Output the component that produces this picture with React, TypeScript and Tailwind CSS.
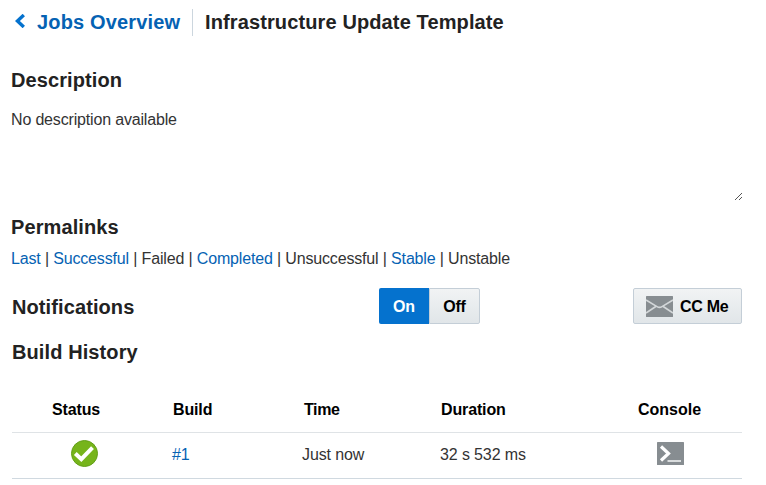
import React from "react";

const permalinks = [
  { label: "Last", link: true },
  { label: "Successful", link: true },
  { label: "Failed", link: false },
  { label: "Completed", link: true },
  { label: "Unsuccessful", link: false },
  { label: "Stable", link: true },
  { label: "Unstable", link: false },
];

function Heading({ children, className = "" }: { children: React.ReactNode; className?: string }) {
  return <h2 className={`text-[20px] leading-6 font-bold tracking-[0.1px] text-[#222] ${className}`}>{children}</h2>;
}

function BackIcon() {
  return (
    <svg width="10" height="14" viewBox="0 0 10 14" fill="none" stroke="#0572ce" strokeWidth="3.4">
      <path d="M8.8 1 2.4 7l6.4 6" />
    </svg>
  );
}

function ResizeGrip() {
  return (
    <svg width="8" height="8" viewBox="0 0 8 8" fill="#555" shapeRendering="crispEdges">
      {[0, 1, 2, 3, 4, 5, 6].map((i) => (
        <rect key={i} x={i} y={6 - i} width="1" height="1" />
      ))}
      {[4, 5, 6].map((i) => (
        <rect key={i} x={i} y={10 - i} width="1" height="1" />
      ))}
    </svg>
  );
}

function MailIcon() {
  return (
    <svg width="27" height="21" viewBox="0 0 27 21">
      <rect width="27" height="21" rx="0.5" fill="#878d91" />
      <path d="M0 4 11 10.6q2.5 1.5 5 0L27 4M0 17l9.8-6.5M27 17l-9.8-6.5" fill="none" stroke="#d3d7d9" strokeWidth="1.6" />
    </svg>
  );
}

function SuccessIcon() {
  return (
    <svg width="28" height="28" viewBox="0 0 28 28">
      <circle cx="14.5" cy="13.5" r="13" fill="#76b41b" stroke="#639f18" strokeWidth="1" />
      <path d="m5.3 13.5 6 5.6L22.5 7.6" fill="none" stroke="#fff" strokeWidth="4" />
    </svg>
  );
}

function ConsoleIcon() {
  return (
    <svg width="27" height="23" viewBox="0 0 27 23">
      <rect width="27" height="23" rx="0.5" fill="#878d91" />
      <path d="m4 4.5 7.5 7L4 18.5" fill="none" stroke="#fff" strokeWidth="3.2" />
      <path d="M10.5 19H24" stroke="#eef0f1" strokeWidth="1.6" />
    </svg>
  );
}

export default function App() {
  return (
    <main className="h-[485px] w-[766px] overflow-hidden bg-white pl-[11px] font-['Liberation_Sans',Arial,sans-serif] text-[16px] leading-5 text-[#333]">
      <header className="flex h-[44px] items-center">
        <span className="mt-[-3px] ml-[4px] w-[22px]"><BackIcon /></span>
        <a className="w-[144px] text-[20px] font-bold tracking-[0.15px] whitespace-nowrap text-[#0562b3]">Jobs Overview</a>
        <span className="ml-[11px] h-[27px] w-px bg-[#ccd6de]" />
        <h1 className="ml-[12px] text-[20px] font-bold tracking-[0.12px] text-[#222]">Infrastructure Update Template</h1>
      </header>

      <section className="h-[157px] w-[732px]">
        <Heading className="pt-[24px]">Description</Heading>
        <div className="mt-[17px] flex h-[92px] items-start justify-between">
          <p className="mt-px tracking-[-0.17px]">No description available</p>
          <span className="self-end"><ResizeGrip /></span>
        </div>
      </section>

      <section className="pt-[14px]">
        <Heading>Permalinks</Heading>
        <p className="mt-[10px] tracking-[-0.16px] whitespace-nowrap">
          {permalinks.map((item, i) => (
            <React.Fragment key={item.label}>
              {i > 0 && " | "}
              {item.link ? <a className="text-[#0562b3]">{item.label}</a> : <span>{item.label}</span>}
            </React.Fragment>
          ))}
        </p>
      </section>

      <section className="mt-[19px] flex h-[36px] w-[731px] items-center">
        <Heading className="w-[368px] pt-[2px] pl-px">Notifications</Heading>
        <div className="flex h-[36px] w-[101px] font-bold">
          <button className="w-[50px] rounded-l-[2px] bg-[#0572ce] pt-[2px] text-white">On</button>
          <button className="w-[51px] rounded-r-[2px] border border-[#c4ced7] bg-linear-to-b from-[#f1f3f4] to-[#e1e6e9] pt-[2px] tracking-[-0.2px] text-black">Off</button>
        </div>
        <button className="ml-auto flex h-[36px] w-[109px] items-center rounded-[2px] border border-[#c4ced7] bg-linear-to-b from-[#f1f3f4] to-[#e1e6e9] pl-[12px] font-bold text-black">
          <MailIcon />
          <span className="ml-[7px] pt-[2px] tracking-[-0.3px]">CC Me</span>
        </button>
      </section>

      <section className="ml-px w-[730px]">
        <Heading className="mt-[16px]">Build History</Heading>
        <div className="mt-[23px] grid h-[46px] grid-cols-[161px_131px_137px_197px_104px] items-center border-b border-[#dfe3e6] font-bold tracking-[-0.14px] text-black">
          <span className="pl-[40px]">Status</span>
          <span>Build</span>
          <span className="tracking-[-0.4px]">Time</span>
          <span>Duration</span>
          <span className="tracking-normal">Console</span>
        </div>
        <div className="grid h-[46px] grid-cols-[160px_130px_138px_217px_85px] items-center border-b border-[#d0d9e0] tracking-[-0.12px]">
          <span className="mt-[-4px] pl-[58px]"><SuccessIcon /></span>
          <a className="pb-[2px] text-[#0562b3]">#1</a>
          <span className="pb-[2px]">Just now</span>
          <span className="pb-[2px]">32 s 532 ms</span>
          <span className="mt-[-4px]"><ConsoleIcon /></span>
        </div>
      </section>
    </main>
  );
}
